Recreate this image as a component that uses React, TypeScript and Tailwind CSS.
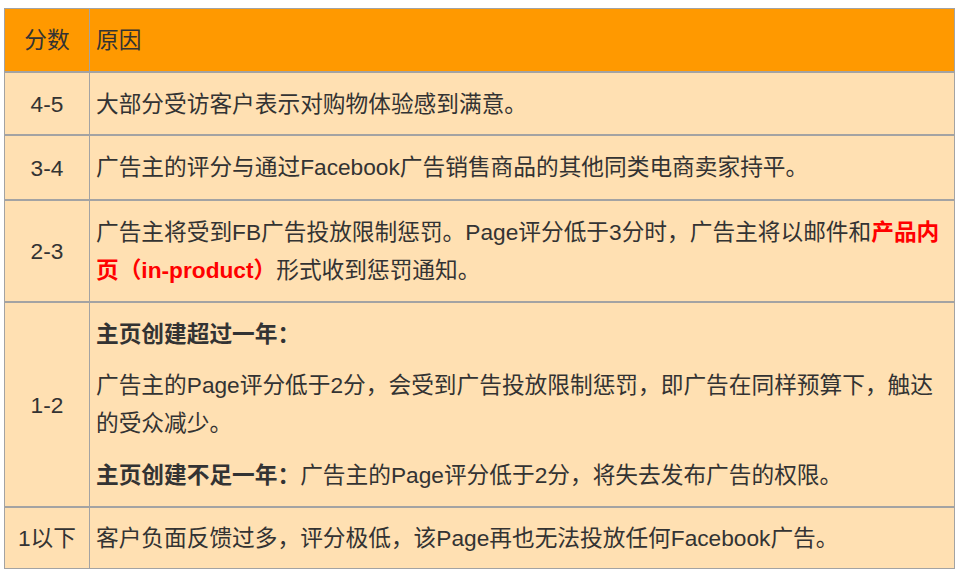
import React from "react";

const font = { fontFamily: '"Liberation Sans", "Noto Sans CJK SC", sans-serif' };

function Row({
  score,
  children,
  last = false,
  pad = "pt-[12px] pb-[11px]",
}: {
  score: string;
  children: React.ReactNode;
  last?: boolean;
  pad?: string;
}) {
  return (
    <div className={`flex bg-[#ffe0b2] ${last ? "" : "border-b-2 border-[#a3a3a3]"}`}>
      <div className="w-[85px] shrink-0 border-r border-[#a3a3a3] flex items-center justify-center">{score}</div>
      <div className={`flex-1 pl-[6px] pr-[6px] ${pad}`}>{children}</div>
    </div>
  );
}

export default function App() {
  return (
    <div className="bg-white w-[959px] h-[574px] pt-[8px] px-[4px]" style={font}>
      <div className="border border-[#a3a3a3] text-[#333333] text-[22.7px] leading-[38px]">
        <div className="flex bg-[#ff9900] border-b-2 border-[#a3a3a3] h-[64px]">
          <div className="w-[85px] shrink-0 border-r border-[#a3a3a3] flex items-center justify-center">分数</div>
          <div className="flex-1 px-[6px] flex items-center">原因</div>
        </div>
        <Row score="4-5">大部分受访客户表示对购物体验感到满意。</Row>
        <Row score="3-4" pad="pt-[12px] pb-[13px]">
          广告主的评分与通过Facebook广告销售商品的其他同类电商卖家持平。
        </Row>
        <Row score="2-3" pad="pt-[12px] pb-[12px]">
          广告主将受到FB广告投放限制惩罚。Page评分低于3分时，广告主将以邮件和
          <span className="font-bold text-[#ff0000]">产品内页（in-product）</span>形式收到惩罚通知。
        </Row>
        <Row score="1-2" pad="pt-[12px] pb-[12px]">
          <p className="font-bold">主页创建超过一年：</p>
          <p className="mt-[13px]">广告主的Page评分低于2分，会受到广告投放限制惩罚，即广告在同样预算下，触达的受众减少。</p>
          <p className="mt-[14px]">
            <span className="font-bold">主页创建不足一年：</span>广告主的Page评分低于2分，将失去发布广告的权限。
          </p>
        </Row>
        <Row score="1以下" last pad="pt-[11px] pb-[11px]">
          客户负面反馈过多，评分极低，该Page再也无法投放任何Facebook广告。
        </Row>
      </div>
    </div>
  );
}
